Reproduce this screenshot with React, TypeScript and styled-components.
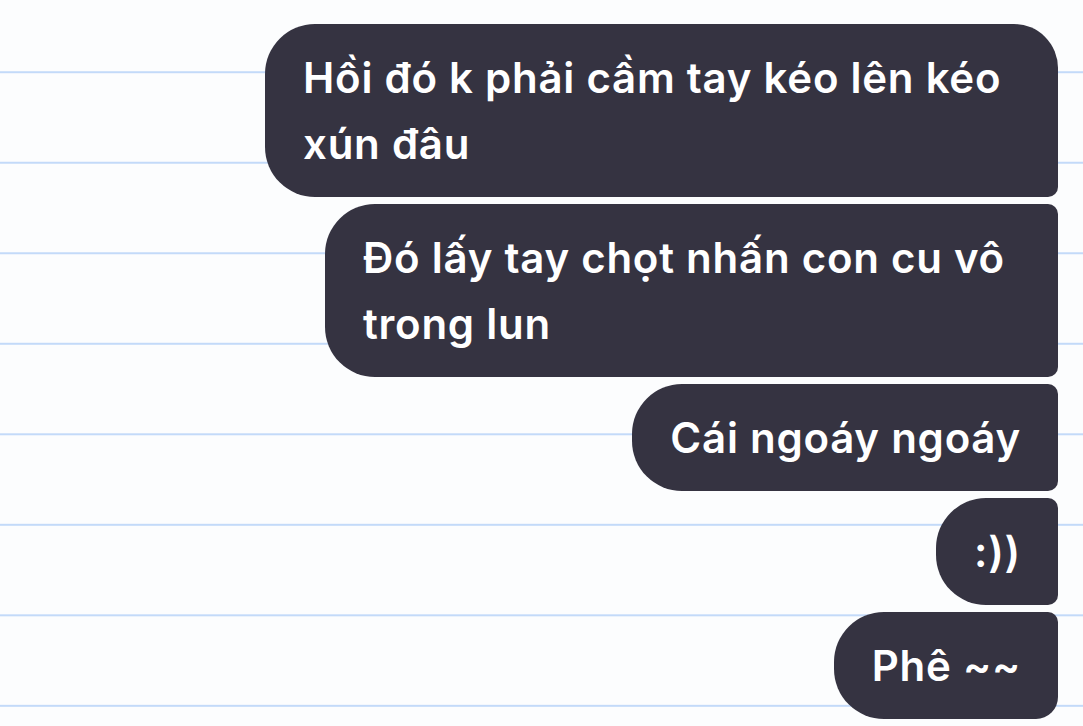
import React from "react";
import styled, { createGlobalStyle } from "styled-components";

const GlobalStyle = createGlobalStyle`
  html, body {
    margin: 0;
    padding: 0;
    background: #fcfdfe;
  }
  * {
    box-sizing: border-box;
  }
`;

const StyledPage = styled.div`
  width: 1083px;
  height: 726px;
  overflow: hidden;
  background-color: #fcfdfe;
  background-image: linear-gradient(
    to bottom,
    transparent 0,
    transparent 88.5px,
    #c3daf9 88.5px,
    #c3daf9 90.5px
  );
  background-size: 100% 90.53px;
  background-position: 0 -17.3px;
  display: flex;
  flex-direction: column;
  align-items: flex-end;
  gap: 7px;
  padding: 24px 25px 0 0;
`;

type TCorner = "first" | "middle" | "last";

const StyledBubble = styled.div<{ $corner: TCorner; $width?: number }>`
  width: ${(p) => (p.$width ? `${p.$width}px` : "auto")};
  background: #353341;
  color: #ffffff;
  font-family: Inter, "Noto Sans", sans-serif;
  font-weight: 600;
  font-size: 42px;
  letter-spacing: 0.75px;
  line-height: 66px;
  white-space: pre-line;
  padding: 20.5px 37px 20.5px 38px;
  border-radius: ${(p) =>
    p.$corner === "first"
      ? "50px 44px 10px 50px"
      : p.$corner === "last"
      ? "50px 10px 22px 50px"
      : "50px 10px 10px 50px"};
`;

interface IMessage {
  id: number;
  text: string;
  corner: TCorner;
  width?: number;
}

const messages: IMessage[] = [
  {
    id: 1,
    text: "Hồi đó k phải cầm tay kéo lên kéo\nxún đâu",
    corner: "first",
    width: 793,
  },
  {
    id: 2,
    text: "Đó lấy tay chọt nhấn con cu vô\ntrong lun",
    corner: "middle",
    width: 733,
  },
  { id: 3, text: "Cái ngoáy ngoáy", corner: "middle" },
  { id: 4, text: ":))", corner: "middle" },
  { id: 5, text: "Phê ~~", corner: "last" },
];

const App = () => {
  return (
    <StyledPage>
      <GlobalStyle />
      {messages.map((message) => (
        <StyledBubble
          key={message.id}
          $corner={message.corner}
          $width={message.width}
        >
          {message.text}
        </StyledBubble>
      ))}
    </StyledPage>
  );
};

export default App;
